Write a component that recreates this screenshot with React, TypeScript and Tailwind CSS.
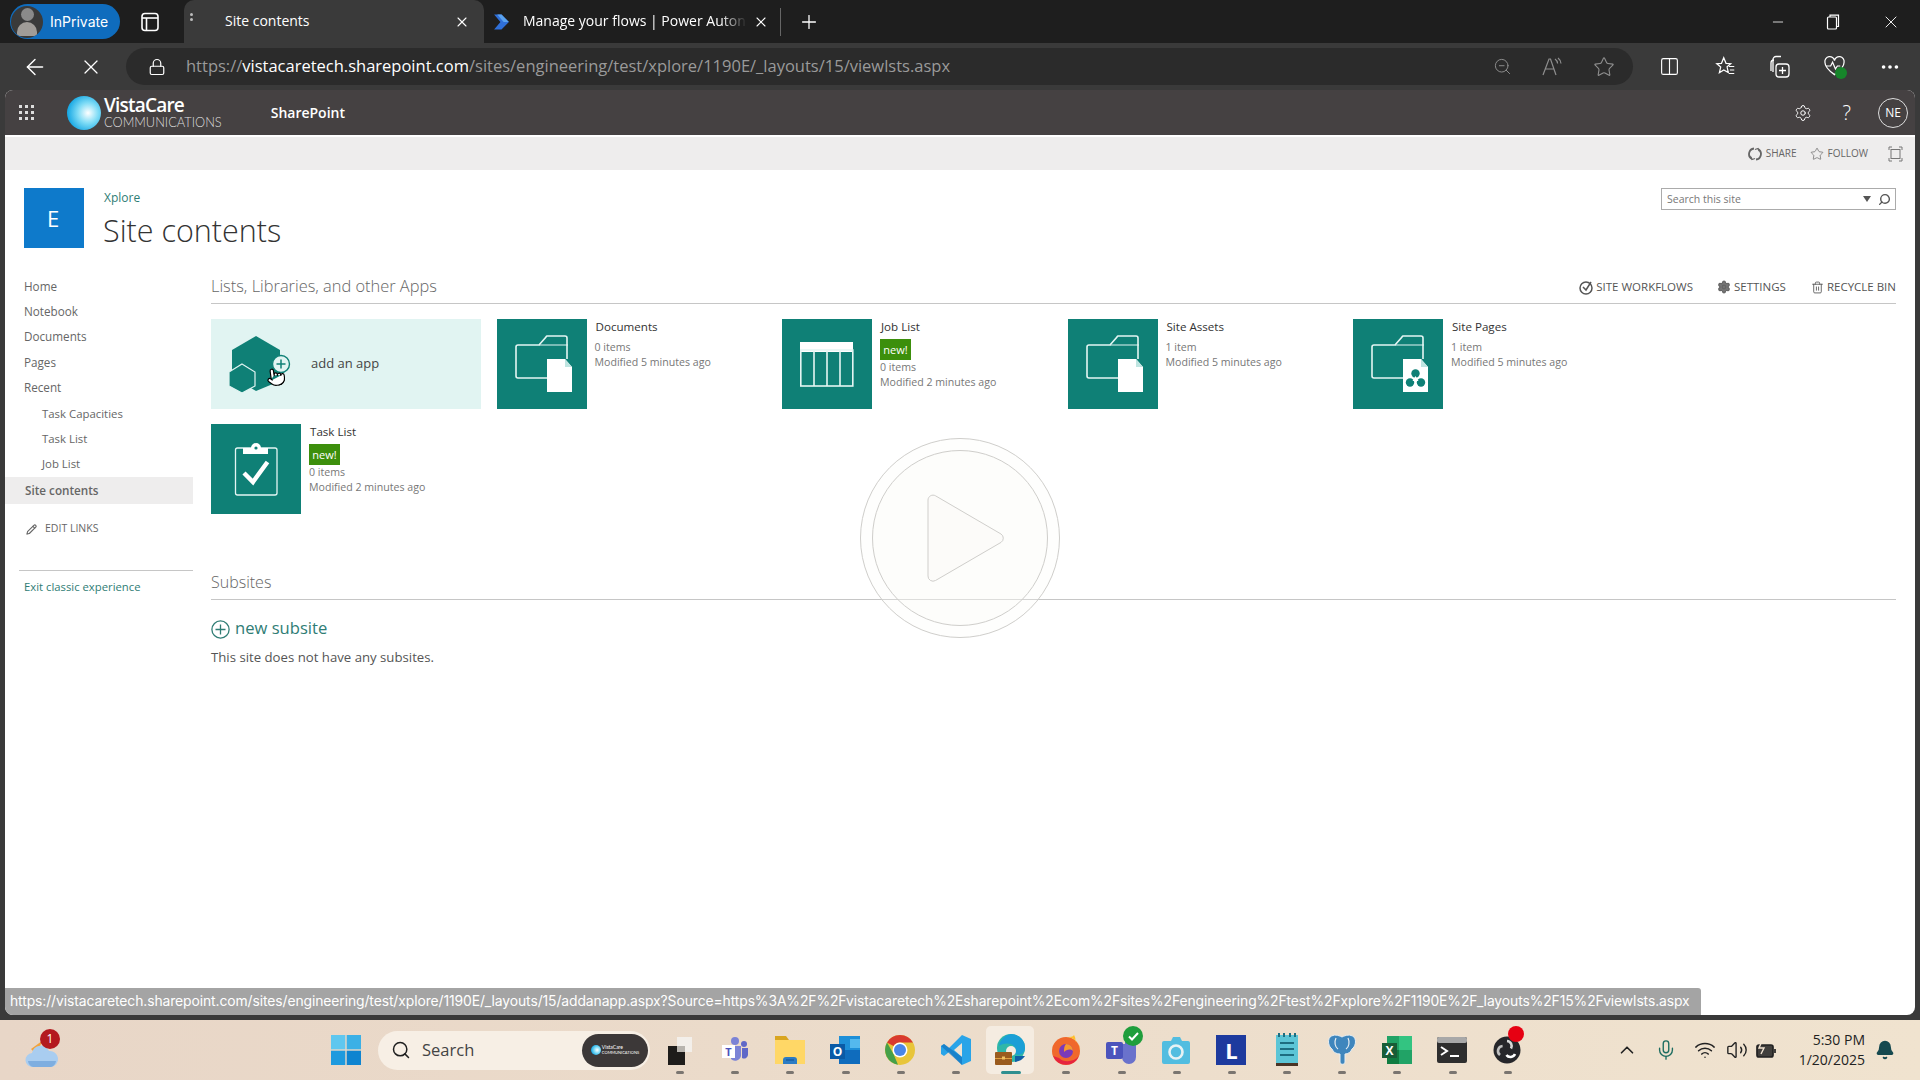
import React from "react";
import {
  ArrowLeft, X, Lock, Plus, Minus, ZoomOut, Star, Columns2, Ellipsis, Settings,
  Pencil, Pointer, Search, ChevronUp, Mic, Wifi, Volume2, Bell, Trash2,
} from "lucide-react";

const teal = "#0f8076";

function Folder({ recycle }: { recycle?: boolean }) {
  return (
    <svg width="90" height="90" viewBox="0 0 90 90" fill="none">
      <path d="M50 59H21a2 2 0 0 1-2-2V28a2 2 0 0 1 2-2h21l7-8a2 2 0 0 1 1-1h18a2 2 0 0 1 2 2v21" stroke="#e4f5f3" strokeWidth="1.6" />
      <path d="M42 26H71" stroke="#e4f5f3" strokeWidth="1" />
      <path d="M50 40H68L75 48V73H50Z" fill="#fff" />
      <path d="M68 40L75 48H68Z" fill="#bfe5e1" />
      {recycle && (
        <g fill={teal}>
          <circle cx="62.5" cy="54.5" r="4.2" />
          <circle cx="57" cy="63.5" r="4.2" />
          <circle cx="68" cy="63.5" r="4.2" />
          <path d="M62.5 57L59.5 62H65.5Z" fill="#fff" />
        </g>
      )}
    </svg>
  );
}

function TableIcon() {
  return (
    <svg width="90" height="90" viewBox="0 0 90 90" fill="none" stroke="#e4f5f3" strokeWidth="1.6">
      <rect x="18" y="23" width="53" height="10" fill="#fff" strokeWidth="0" />
      <rect x="18.8" y="31" width="52" height="36" />
      <path d="M32 32V67M45 32V67M58 32V67" />
    </svg>
  );
}

function ClipIcon() {
  return (
    <svg width="90" height="90" viewBox="0 0 90 90" fill="none">
      <rect x="24.5" y="24" width="41.5" height="47" rx="2" stroke="#e4f5f3" strokeWidth="1.3" />
      <path d="M32 24h8a5 5 0 0 1 10 0h7v6H32Z" fill="#fff" />
      <circle cx="45" cy="24" r="1.6" fill={teal} />
      <path d="M33 49L42 58L56.5 38" stroke="#fff" strokeWidth="4.4" />
    </svg>
  );
}

function AppTile({ name, meta, isNew, icon }: { name: string; meta: string; isNew?: boolean; icon: React.ReactNode }) {
  const lines = meta.split("|");
  return (
    <div className="flex h-[90px] w-[270px]">
      <div className="h-[90px] w-[90px] shrink-0 bg-[#0f8076]">{icon}</div>
      <div className="ml-[8px] flex flex-col">
        <div className="ml-[1px] mt-[-1px] text-[11.6px] leading-[17px] text-[#333333]">{name}</div>
        {isNew ? (
          <div className="mt-[3.5px] w-[31px] bg-[#3c8f0c] text-center text-[11px] leading-[21px] text-white">new!</div>
        ) : (
          <div className="h-[4px]" />
        )}
        <div className="mt-[0.5px] text-[10.6px] leading-[15px] text-[#777777]">{lines[0]}</div>
        <div className="text-[10.6px] leading-[15px] text-[#777777]">{lines[1]}</div>
      </div>
    </div>
  );
}

function NavItem({ label, sub }: { label: string; sub?: boolean }) {
  return (
    <div className={`flex h-[25.3px] items-center text-[#666666] ${sub ? "pl-[37px] text-[11.4px]" : "pl-[19px] text-[11.7px]"}`}>
      {label}
    </div>
  );
}

function TaskItem({ children, active }: { children: React.ReactNode; active?: boolean }) {
  return (
    <div className="relative flex h-[60px] w-[55.2px] shrink-0 items-center justify-center">
      {active && <div className="absolute left-[3px] top-[6px] h-[48px] w-[48px] rounded-[5px] bg-[#f5ece1]" />}
      <div className="relative">{children}</div>
      <div className={`absolute top-[51px] h-[3px] rounded-full ${active ? "left-[18px] w-[20px] bg-[#2f8f8f]" : "left-[24px] w-[8px] bg-[#7a7570]"}`} />
    </div>
  );
}

function Logo({ small }: { small?: boolean }) {
  return (
    <svg width={small ? 10 : 34} height={small ? 10 : 34} viewBox="0 0 34 34">
      <defs>
        <radialGradient id={small ? "lg2" : "lg1"} cx="0.62" cy="0.5" r="0.6">
          <stop offset="0" stopColor="#ffffff" />
          <stop offset="0.5" stopColor="#7fdcf6" />
          <stop offset="1" stopColor="#18a8e4" />
        </radialGradient>
      </defs>
      <circle cx="17" cy="17" r="17" fill={`url(#${small ? "lg2" : "lg1"})`} />
    </svg>
  );
}

export default function App() {
  return (
    <div className="relative flex h-[1080px] w-[1920px] flex-col overflow-hidden bg-[#3a3a3a] font-['Open_Sans',sans-serif]">
      {/* title bar */}
      <div className="flex h-[43px] shrink-0 items-center bg-[#1e1e1e] text-white">
        <div className="ml-[10px] flex h-[35px] w-[110px] items-center rounded-full bg-[#0f6cbd]">
          <div className="ml-[1px] flex h-[32px] w-[32px] flex-col items-center justify-center overflow-hidden rounded-full bg-[#3a3a3a]">
            <div className="h-[13px] w-[13px] rounded-full bg-[#8a8a8a]" />
            <div className="mt-[1px] h-[14px] w-[20px] rounded-t-full bg-[#a09c98]" />
          </div>
          <span className="ml-[7px] font-['Inter',sans-serif] text-[14px] text-white">InPrivate</span>
        </div>
        <svg className="ml-[21px]" width="18" height="20" viewBox="0 0 18 20" fill="none" stroke="#fff" strokeWidth="1.6">
          <rect x="1" y="1.5" width="16" height="17" rx="3" />
          <path d="M1 6H17" />
          <path d="M5.5 6V18.5" />
        </svg>
        <div className="ml-[25px] flex h-[43px] w-[300px] items-center rounded-t-[10px] bg-[#3a3a3a]">
          <div className="ml-[6px] mb-[10px] flex flex-col gap-[2px]">
            <div className="h-[3px] w-[3px] rounded-full bg-[#bbb]" />
            <div className="h-[3px] w-[3px] rounded-full bg-[#bbb]" />
          </div>
          <span className="mb-[2px] ml-[32px] flex-1 text-[14px] text-white">Site contents</span>
          <X className="mr-[14px]" size={16} strokeWidth={1.6} />
        </div>
        <svg className="ml-[8px]" width="19" height="20" viewBox="0 0 18 18">
          <path d="M2 2H9L16 9L9 16H2L8 9Z" fill="#2f6fd8" />
          <path d="M5 2H9L16 9H11Z" fill="#5aa2ef" />
        </svg>
        <span className="mb-[2px] ml-[12px] w-[224px] whitespace-nowrap text-[14px] text-white [mask-image:linear-gradient(to_right,black_88%,transparent)]">Manage your flows | Power Auton</span>
        <X className="ml-[6px]" size={16} strokeWidth={1.6} />
        <div className="ml-[11px] h-[28px] w-[1px] bg-[#666]" />
        <Plus className="ml-[17px]" size={22} strokeWidth={1.4} />
        <div className="flex-1" />
        <Minus className="mr-[40px]" size={16} strokeWidth={1.2} />
        <svg className="mr-[41px]" width="14" height="16" viewBox="0 0 14 16" fill="none" stroke="#fff" strokeWidth="1.2">
          <rect x="1.5" y="3" width="9" height="12" rx="1" />
          <path d="M4 3V1.2H12.5V12.5H10.5" />
        </svg>
        <X className="mr-[19px]" size={20} strokeWidth={1.1} />
      </div>

      {/* address row */}
      <div className="flex h-[47px] shrink-0 items-center bg-[#3a3a3a] text-white">
        <ArrowLeft className="ml-[22px]" size={26} strokeWidth={1.3} />
        <X className="ml-[31px]" size={24} strokeWidth={1.2} />
        <div className="ml-[23px] flex h-[37px] w-[1507px] items-center rounded-full bg-[#2b2b2b]">
          <Lock className="ml-[22px]" size={18} strokeWidth={1.6} />
          <div className="ml-[20px] flex-1 whitespace-nowrap text-[16.5px] text-[#9a9a9a]">
            https://<span className="text-white">vistacaretech.sharepoint.com</span>/sites/engineering/test/xplore/1190E/_layouts/15/viewlsts.aspx
          </div>
          <ZoomOut className="mr-[29px] text-[#8f8f8f]" size={19} strokeWidth={1.2} />
          <svg className="mr-[30px]" width="22" height="20" viewBox="0 0 22 20" fill="none" stroke="#8f8f8f" strokeWidth="1.2">
            <path d="M2 18L8 2H9.5L15 18M4.5 12H13" />
            <path d="M14 2c1.5 1 2.4 2.5 2.6 4.5M17 1c1.8 1.4 2.8 3 3 5.5" />
          </svg>
          <Star className="mr-[18px] text-[#8f8f8f]" size={22} strokeWidth={1.2} />
        </div>
        <Columns2 className="ml-[26px]" size={21} strokeWidth={1.3} />
        <svg className="ml-[35px]" width="21" height="21" viewBox="0 0 24 24" fill="none" stroke="#fff" strokeWidth="1.4">
          <path d="M10 2l2.6 6.4 5.4.4-4.2 3.6 1.4 6.6L10 16l-5 3.2 1.5-6.6L2 8.8l5.4-.4Z" />
          <path d="M16 12h6M17 16h5M16 20h6" />
        </svg>
        <svg className="ml-[33px]" width="21" height="24" viewBox="0 0 21 24" fill="none" stroke="#fff" strokeWidth="1.3">
          <path d="M4 17V4.5A3 3 0 0 1 7 1.5h5" />
          <path d="M2 16V8a3 3 0 0 1 3-3" />
          <rect x="7" y="9" width="13" height="13" rx="3" />
          <path d="M13.5 12V19M10 15.5H17" />
        </svg>
        <div className="relative ml-[33px] h-[24px] w-[24px]">
          <svg width="23" height="22" viewBox="0 0 24 22" fill="none" stroke="#fff" strokeWidth="1.3">
            <path d="M12 20C5 15 2 11 2 7a5 5 0 0 1 10-1.5A5 5 0 0 1 22 7c0 4-3 8-10 13Z" />
            <path d="M3 11H8L10 7L13 14L15 11H18" />
          </svg>
          <div className="absolute left-[12px] top-[12px] h-[12px] w-[12px] rounded-full bg-[#16852a]" />
        </div>
        <Ellipsis className="ml-[32px]" size={22} strokeWidth={2} />
      </div>

      {/* page */}
      <div className="relative mx-[5px] flex h-[925px] shrink-0 flex-col overflow-hidden rounded-t-[8px] rounded-b-[8px] bg-white">
        {/* suite bar */}
        <div className="flex h-[45px] shrink-0 items-center bg-[#454142] text-white">
          <div className="ml-[14px] grid grid-cols-3 gap-[3px]">
            {[0, 1, 2, 3, 4, 5, 6, 7, 8].map((i) => (
              <div key={i} className="h-[3px] w-[3px] bg-[#dddddd]" />
            ))}
          </div>
          <div className="ml-[33px]"><Logo /></div>
          <div className="ml-[3px] flex flex-col">
            <span className="text-[19px] font-semibold leading-[19px] tracking-[-0.8px]">VistaCare</span>
            <span className="font-['Lato',sans-serif] text-[12.8px] font-light leading-[14px] text-[#dddddd]">COMMUNICATIONS</span>
          </div>
          <span className="ml-[49px] text-[14px] font-semibold">SharePoint</span>
          <div className="flex-1" />
          <Settings className="mr-[31px]" size={18} strokeWidth={1.3} />
          <span className="mr-[27px] text-[20px] font-light">?</span>
          <div className="mr-[7px] flex h-[30px] w-[30px] items-center justify-center rounded-full border border-[#dddddd] text-[12px]">NE</div>
        </div>
        <div className="h-[2px] shrink-0 bg-white" />
        {/* ribbon */}
        <div className="flex h-[33px] shrink-0 items-center justify-end bg-[#eeeded] text-[10px] text-[#666666]">
          <svg className="mr-[4px]" width="14" height="14" viewBox="0 0 14 14" fill="none" stroke="#666" strokeWidth="1.8">
            <path d="M6 1.5A5.6 5.6 0 0 0 4 12M8 12.5A5.6 5.6 0 0 0 10 2" />
            <path d="M2.5 9.5L4 12.5L7 11.5M11.5 4.5L10 1.5L7 2.5" strokeWidth="1.2" />
          </svg>
          <span>SHARE</span>
          <Star className="ml-[13px] mr-[4px]" size={14} strokeWidth={1.2} />
          <span>FOLLOW</span>
          <svg className="ml-[20px] mr-[12px]" width="15" height="16" viewBox="0 0 15 16" fill="none" stroke="#777" strokeWidth="1">
            <rect x="3" y="3.5" width="9" height="9" />
            <path d="M1 4V1H4M11 1H14V4M14 12V15H11M4 15H1V12" />
          </svg>
        </div>
        {/* header */}
        <div className="flex h-[104px] shrink-0 pl-[19px] pt-[18px]">
          <div className="flex h-[60px] w-[60px] items-center justify-center bg-[#0e7acb] pr-[2px] text-[22px] text-white">E</div>
          <div className="ml-[19px] flex flex-col">
            <span className="ml-[1px] mt-[1px] text-[12px] leading-[18px] text-[#2f7d75]">Xplore</span>
            <span className="mt-[2px] text-[30.5px] font-light leading-[42px] text-[#333333]">Site contents</span>
          </div>
          <div className="flex-1" />
          <div className="mr-[19px] flex h-[22px] w-[235px] items-center border border-[#ababab] pl-[5px] text-[10.5px] text-[#777777]">
            <span className="flex-1 pt-[1px]">Search this site</span>
            <svg className="mr-[7px]" width="8" height="6" viewBox="0 0 8 6"><path d="M0 0H8L4 6Z" fill="#555" /></svg>
            <Search className="mr-[4px] -scale-x-100 text-[#555]" size={13} strokeWidth={2.6} />
          </div>
        </div>
        {/* body */}
        <div className="flex flex-1">
          <div className="flex w-[188px] shrink-0 flex-col">
            <NavItem label="Home" />
            <NavItem label="Notebook" />
            <NavItem label="Documents" />
            <NavItem label="Pages" />
            <NavItem label="Recent" />
            <NavItem label="Task Capacities" sub />
            <NavItem label="Task List" sub />
            <NavItem label="Job List" sub />
            <div className="mt-[1px] flex h-[27px] items-center bg-[#eeeded] pl-[20px] text-[11.7px] font-semibold text-[#666666]">Site contents</div>
            <div className="mt-[17px] flex items-center pl-[21px] text-[10.5px] text-[#666666]">
              <Pencil size={11} strokeWidth={2.4} />
              <span className="ml-[8px]">EDIT LINKS</span>
            </div>
            <div className="ml-[14px] mt-[33px] h-[1px] bg-[#c6c6c6]" />
            <div className="pl-[19px] pt-[7px] text-[11.3px] leading-[17px] text-[#2f7d75]">Exit classic experience</div>
          </div>
          <div className="ml-[18px] mr-[19px] mt-[1px] flex flex-1 flex-col">
            <div className="flex h-[29px] shrink-0 items-center border-b border-[#c6c6c6] pb-[6px]">
              <span className="flex-1 text-[16.4px] font-light text-[#666666]">Lists, Libraries, and other Apps</span>
              <div className="mt-[2px] flex items-center text-[11.5px] text-[#555555]">
                <svg className="mr-[3px]" width="14" height="15" viewBox="0 0 14 15" fill="none" stroke="#555" strokeWidth="1.5">
                  <circle cx="7" cy="8" r="6" /><path d="M4 7L7 10L12 2" />
                </svg>
                <span>SITE WORKFLOWS</span>
                <Settings className="ml-[24px] mr-[3px] fill-[#777] text-[#666]" size={14} strokeWidth={2.2} />
                <span>SETTINGS</span>
                <Trash2 className="ml-[25px] mr-[3px]" size={13} strokeWidth={1.6} />
                <span>RECYCLE BIN</span>
              </div>
            </div>
            <div className="mt-[15px] flex w-[1430px] flex-wrap gap-x-[15.5px] gap-y-[15px]">
              <div className="relative flex h-[90px] w-[270px] items-center bg-[#e1f4f2]">
                <svg className="shrink-0" width="90" height="90" viewBox="0 0 90 90">
                  <path d="M45 17L69 31V62L45 72L21 58V31Z" fill={teal} />
                  <path d="M31 45L44 53V67L31 74L18 67V53Z" fill={teal} stroke="#e1f4f2" strokeWidth="1.2" />
                  <circle cx="70" cy="45" r="8.5" fill="#e1f4f2" stroke={teal} strokeWidth="1.4" />
                  <path d="M70 40.5V49.5M65.5 45H74.5" stroke={teal} strokeWidth="1.5" />
                </svg>
                <span className="ml-[10px] text-[13px] text-[#444444]">add an app</span>
                <Pointer className="absolute left-[55px] top-[48px] -rotate-[8deg] fill-white text-black" size={20} strokeWidth={1.4} />
              </div>
              <AppTile name="Documents" meta="0 items|Modified 5 minutes ago" icon={<Folder />} />
              <AppTile name="Job List" isNew meta="0 items|Modified 2 minutes ago" icon={<TableIcon />} />
              <AppTile name="Site Assets" meta="1 item|Modified 5 minutes ago" icon={<Folder />} />
              <AppTile name="Site Pages" meta="1 item|Modified 5 minutes ago" icon={<Folder recycle />} />
              <AppTile name="Task List" isNew meta="0 items|Modified 2 minutes ago" icon={<ClipIcon />} />
            </div>
            <div className="mt-[57px] flex h-[29px] items-center border-b border-[#c6c6c6] pb-[6px] text-[16px] font-light text-[#666666]">Subsites</div>
            <div className="mt-[14px] flex items-center text-[16.6px] leading-[28px] text-[#2f7d75]">
              <svg className="mr-[5px] mt-[2px]" width="19" height="19" viewBox="0 0 19 19" fill="none" stroke="#2f7d75" strokeWidth="1.3">
                <circle cx="9.5" cy="9.5" r="8.6" /><path d="M9.5 4.5V14.5M4.5 9.5H14.5" />
              </svg>
              new subsite
            </div>
            <div className="mt-[6px] text-[13.2px] leading-[18px] text-[#555555]">This site does not have any subsites.</div>
          </div>
        </div>

        {/* play overlay */}
        <svg className="pointer-events-none absolute left-[855px] top-[348px]" width="200" height="200" viewBox="0 0 200 200" fill="none" stroke="#cfcecb" strokeWidth="1">
          <circle cx="100" cy="100" r="99.5" fill="#fbfaf7" fillOpacity="0.25" />
          <circle cx="100" cy="100" r="87.5" fill="#fbfaf7" fillOpacity="0.25" />
          <path d="M68 62a5 5 0 0 1 7.5-4.2L141 96a5 5 0 0 1 0 8.4L75.5 142.5A5 5 0 0 1 68 138Z" fill="#fbfaf7" fillOpacity="0.5" />
        </svg>

        {/* status bubble */}
        <div className="absolute bottom-0 left-0 flex h-[27px] w-[1696px] items-center overflow-hidden whitespace-nowrap rounded-tr-[3px] bg-[#a4a4a4] pl-[5px] font-['Inter',sans-serif] text-[13.9px] tracking-[-0.1px] text-white">
          https://vistacaretech.sharepoint.com/sites/engineering/test/xplore/1190E/_layouts/15/addanapp.aspx?Source=https%3A%2F%2Fvistacaretech%2Esharepoint%2Ecom%2Fsites%2Fengineering%2Ftest%2Fxplore%2F1190E%2F_layouts%2F15%2Fviewlsts.aspx
        </div>
      </div>

      <div className="h-[5px] shrink-0" />

      {/* taskbar */}
      <div className="flex h-[60px] shrink-0 items-center bg-gradient-to-r from-[#e8d6c7] to-[#f0e3cf] text-[#222222]">
        <div className="relative ml-[25px] h-[40px] w-[34px]">
          <svg className="absolute left-0 top-[5px]" width="34" height="34" viewBox="0 0 34 34">
            <path d="M6 14L17 6L12 20Z" fill="#f2a33c" />
            <path d="M8 32a7 7 0 0 1-1-14 9 9 0 0 1 17-2 8 8 0 0 1 2 16Z" fill="#a9cdf0" />
            <path d="M8 32a7 7 0 0 1-5-6h28a7 7 0 0 1-5 6Z" fill="#7eaee0" />
          </svg>
          <div className="absolute left-[15px] top-[-1px] flex h-[20px] w-[20px] items-center justify-center rounded-full bg-[#b3191f] text-[12px] text-white">1</div>
        </div>
        <svg className="ml-[272px]" width="30" height="30" viewBox="0 0 30 30">
          <rect x="0" y="0" width="14.3" height="14.3" fill="#5fc7ef" />
          <rect x="15.7" y="0" width="14.3" height="14.3" fill="#3bb0e6" />
          <rect x="0" y="15.7" width="14.3" height="14.3" fill="#1e9ade" />
          <rect x="15.7" y="15.7" width="14.3" height="14.3" fill="#0f84d0" />
        </svg>
        <div className="ml-[17px] flex h-[39px] w-[272px] items-center rounded-full bg-[#f7efe5] text-[16.5px] text-[#444]">
          <Search className="ml-[13px] text-[#1f1f1f]" size={20} strokeWidth={1.8} />
          <span className="ml-[11px] flex-1">Search</span>
          <div className="mr-[2px] flex h-[33px] w-[66px] items-center justify-center rounded-full bg-[#3c3838]">
            <Logo small />
            <div className="ml-[1px] flex flex-col font-['Lato',sans-serif] text-[5px] leading-[5px] text-white">
              <span>VistaCare</span><span className="text-[4px]">COMMUNICATIONS</span>
            </div>
          </div>
        </div>
        <div className="ml-[2px] flex">
          <TaskItem>
            <svg width="24" height="30" viewBox="0 0 24 30">
              <rect x="9" y="2" width="15" height="15" fill="#f3efea" />
              <rect x="0" y="11" width="17" height="19" fill="#1e1c1a" />
              <rect x="9" y="11" width="8" height="6" fill="#b8b4ae" />
            </svg>
          </TaskItem>
          <TaskItem>
            <svg width="28" height="28" viewBox="0 0 28 28">
              <circle cx="14" cy="5" r="4" fill="#7b83d6" />
              <circle cx="23" cy="8" r="3" fill="#5f68c8" />
              <path d="M10 10H20V20a6 6 0 0 1-10 3Z" fill="#7b83d6" />
              <path d="M21 12H27V19a4 4 0 0 1-6 3Z" fill="#5f68c8" />
              <rect x="1" y="9" width="13" height="13" fill="#ffffff" />
              <text x="7.5" y="20" fontSize="11" textAnchor="middle" fill="#4b53bc" fontWeight="700">T</text>
            </svg>
          </TaskItem>
          <TaskItem>
            <svg width="30" height="28" viewBox="0 0 30 28">
              <path d="M0 0H11L14 4H0Z" fill="#d9a520" />
              <rect x="0" y="4" width="30" height="24" fill="#ffd766" />
              <path d="M8 24a3 3 0 0 1 3-3h8a3 3 0 0 1 3 3v4H8Z" fill="#2c7cc4" />
              <rect x="11" y="23.5" width="8" height="1" fill="#0f4f8f" />
            </svg>
          </TaskItem>
          <TaskItem>
            <svg width="30" height="30" viewBox="0 0 30 30">
              <rect x="9" y="1" width="21" height="28" fill="#1e8fd8" />
              <rect x="20" y="4" width="10" height="9" fill="#54b9ee" />
              <rect x="9" y="15" width="21" height="14" fill="#0f6cbd" />
              <rect x="0" y="9" width="15" height="15" fill="#0a5aa6" />
              <text x="7.5" y="21" fontSize="12" textAnchor="middle" fill="#fff" fontWeight="700">O</text>
            </svg>
          </TaskItem>
          <TaskItem>
            <svg width="30" height="30" viewBox="0 0 30 30">
              <circle cx="15" cy="15" r="15" fill="#e8c53a" />
              <path d="M15 0A15 15 0 0 1 28 7.5H15A7.5 7.5 0 0 0 8.5 11L2 7.5A15 15 0 0 1 15 0Z" fill="#d93a2f" />
              <path d="M2 7.5L8.5 19L13 29.7A15 15 0 0 1 2 7.5Z" fill="#45a04a" />
              <circle cx="15" cy="15" r="7.5" fill="#fff" />
              <circle cx="15" cy="15" r="6" fill="#4a86e8" />
            </svg>
          </TaskItem>
          <TaskItem>
            <svg width="30" height="30" viewBox="0 0 30 30">
              <path d="M21 0L30 4V26L21 30L8 17L3 21L0 19V11L3 9L8 13Z" fill="#29a4e8" />
              <path d="M21 8L13 15L21 22Z" fill="#efe2d2" />
              <path d="M0 11L3 9L21 22V30L0 11Z" fill="#0f6cb8" fillOpacity="0.6" />
            </svg>
          </TaskItem>
          <TaskItem active>
            <svg width="32" height="32" viewBox="0 0 32 32">
              <circle cx="16" cy="14" r="14" fill="#2fb7a8" />
              <path d="M16 0A14 14 0 0 1 30 14C30 20 24 22 20 20C24 12 14 6 4 12A14 14 0 0 1 16 0Z" fill="#1b9fd6" />
              <circle cx="16" cy="17" r="5" fill="#f5ece1" />
              <path d="M20 22H30A14 14 0 0 1 20 28Z" fill="#0f5fa6" />
              <rect x="0" y="18" width="17" height="13" rx="1" fill="#9a5b1e" />
              <rect x="0" y="24" width="17" height="1" fill="#e0a040" />
              <rect x="7" y="22.5" width="3" height="3" fill="#f0c060" />
            </svg>
          </TaskItem>
          <TaskItem>
            <svg width="30" height="32" viewBox="0 0 30 32">
              <circle cx="15" cy="17" r="14" fill="#f0682c" />
              <path d="M15 3a14 14 0 0 1 14 14 10 10 0 0 0-5-10c1-2 0-4-1-6-1 2-4 2-8 2Z" fill="#ffc02e" />
              <circle cx="15" cy="17" r="7" fill="#7b3ab8" />
              <path d="M15 10a7 7 0 0 1 7 7c-3-3-7-1-9 1 0-3 0-6 2-8Z" fill="#f79a2c" />
              <path d="M2 22a14 14 0 0 0 26 0c-5 6-15 7-20 2Z" fill="#e6243f" />
            </svg>
          </TaskItem>
          <TaskItem>
            <div className="relative h-[30px] w-[30px]">
              <svg width="30" height="30" viewBox="0 0 30 30">
                <circle cx="23" cy="8" r="4" fill="#5f68c8" />
                <path d="M14 9H30V22a7 7 0 0 1-14 0Z" fill="#6a72cc" />
                <rect x="0" y="7" width="17" height="17" rx="2" fill="#4b53bc" />
                <text x="8.5" y="20" fontSize="12" textAnchor="middle" fill="#fff" fontWeight="700">T</text>
              </svg>
              <div className="absolute left-[17px] top-[-9px] flex h-[20px] w-[20px] items-center justify-center rounded-full bg-[#1f9e3c]">
                <svg width="11" height="9" viewBox="0 0 11 9" fill="none" stroke="#fff" strokeWidth="2"><path d="M1 4.5L4 7.5L10 1" /></svg>
              </div>
            </div>
          </TaskItem>
          <TaskItem>
            <svg width="28" height="28" viewBox="0 0 28 28">
              <path d="M9 5L11 1H18L20 5H26a2 2 0 0 1 2 2V26a2 2 0 0 1-2 2H2a2 2 0 0 1-2-2V7a2 2 0 0 1 2-2Z" fill="#52bde0" />
              <circle cx="14" cy="16" r="6.5" fill="none" stroke="#e6f2f4" strokeWidth="2.6" />
            </svg>
          </TaskItem>
          <TaskItem>
            <div className="flex h-[30px] w-[30px] items-center justify-center bg-[#1d3a9e] text-[22px] font-bold text-white">L</div>
          </TaskItem>
          <TaskItem>
            <svg width="22" height="34" viewBox="0 0 22 34">
              <rect x="0" y="2" width="22" height="30" fill="#5cc5d6" />
              <rect x="0" y="30" width="22" height="3" fill="#4a3526" />
              <path d="M4 10H18M4 16H18M4 22H18" stroke="#1d6d80" strokeWidth="2" />
              <path d="M3 0V4M8 0V4M14 0V4M19 0V4" stroke="#1d6d80" strokeWidth="2" />
            </svg>
          </TaskItem>
          <TaskItem>
            <svg width="28" height="32" viewBox="0 0 28 32">
              <path d="M2 3C6 0 10 1 14 3C18 1 22 0 26 3C29 7 27 13 24 15C23 18 20 20 17 20V28C17 31 12 31 12 28V20C8 20 5 18 4 15C1 13 -1 7 2 3Z" fill="#3f86bd" stroke="#e8eef2" strokeWidth="1" />
              <path d="M8 4C6 8 7 13 10 15M20 4C22 8 21 13 18 15" fill="none" stroke="#e8eef2" strokeWidth="1.2" />
            </svg>
          </TaskItem>
          <TaskItem>
            <svg width="30" height="32" viewBox="0 0 30 32">
              <rect x="5" y="2" width="25" height="28" fill="#21a366" />
              <rect x="17" y="2" width="13" height="14" fill="#33c481" />
              <rect x="5" y="16" width="12" height="14" fill="#107c41" />
              <rect x="0" y="9" width="15" height="15" fill="#185c37" />
              <text x="7.5" y="21" fontSize="12" textAnchor="middle" fill="#fff" fontWeight="700">X</text>
            </svg>
          </TaskItem>
          <TaskItem>
            <svg width="30" height="26" viewBox="0 0 30 26">
              <rect x="0" y="0" width="30" height="26" rx="2" fill="#2e2e2e" />
              <rect x="0" y="0" width="30" height="6" rx="2" fill="#a8a8a8" />
              <path d="M4 10L10 14L4 18" fill="none" stroke="#fff" strokeWidth="2" />
              <path d="M13 19H22" stroke="#fff" strokeWidth="2" />
            </svg>
          </TaskItem>
          <TaskItem>
            <div className="relative h-[28px] w-[28px]">
              <svg width="28" height="28" viewBox="0 0 28 28" fill="none">
                <circle cx="14" cy="14" r="13.5" fill="#26262a" />
                <path d="M14 5a5 5 0 0 1 4 7.5" stroke="#d8d8d8" strokeWidth="2.6" />
                <path d="M22 18a5 5 0 0 1-8.6 1" stroke="#ffffff" strokeWidth="2.6" />
                <path d="M7 19a5 5 0 0 1 2.6-9" stroke="#c0c0c0" strokeWidth="2.6" />
              </svg>
              <div className="absolute left-[15px] top-[-10px] h-[16px] w-[16px] rounded-full bg-[#e60012]" />
            </div>
          </TaskItem>
        </div>
        <div className="flex-1" />
        <ChevronUp className="mr-[17px]" size={22} strokeWidth={1.8} />
        <Mic className="mr-[17px] text-[#1d6d60]" size={22} strokeWidth={1.5} />
        <Wifi className="mr-[10px]" size={22} strokeWidth={1.7} />
        <Volume2 className="mr-[7px]" size={22} strokeWidth={1.5} />
        <svg className="mr-[22px]" width="22" height="20" viewBox="0 0 22 20" fill="none" stroke="#222" strokeWidth="1.7">
          <rect x="2" y="5" width="16" height="12" rx="2" fill="#222" fillOpacity="0.85" />
          <path d="M20 9V13" />
          <path d="M7 1L4 8H9L6 14" stroke="#f2e4d2" strokeWidth="1.4" />
        </svg>
        <div className="flex flex-col items-end text-[14px] leading-[20px]">
          <span>5:30 PM</span>
          <span>1/20/2025</span>
        </div>
        <Bell className="ml-[10px] mr-[25px] fill-[#15494f] text-[#15494f]" size={20} />
      </div>
    </div>
  );
}
